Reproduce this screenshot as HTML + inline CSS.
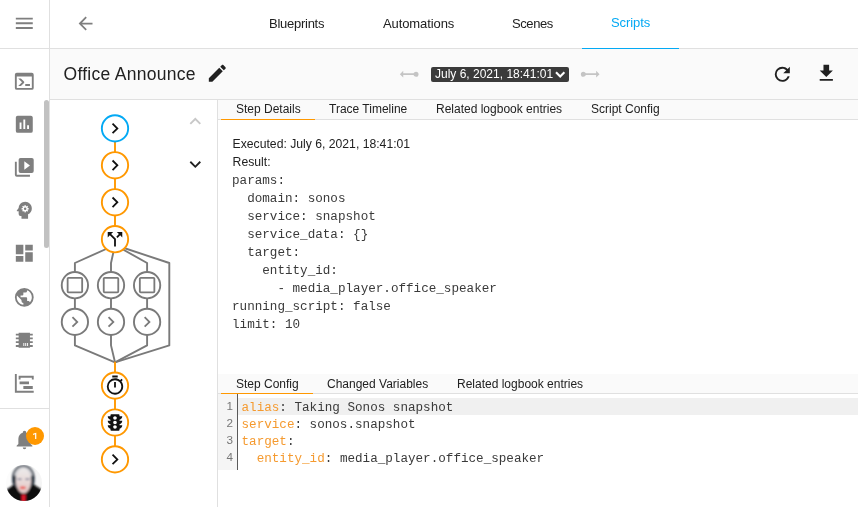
<!DOCTYPE html>
<html>
<head>
<meta charset="utf-8">
<title>Office Announce</title>
<style>
*{box-sizing:border-box;margin:0;padding:0}
html,body{width:858px;height:507px;overflow:hidden;background:#fff;will-change:transform;font-family:"Liberation Sans",sans-serif;color:#212121}
.abs{position:absolute}
svg{display:block;position:absolute;overflow:visible}
/* sidebar */
#sidebar{left:0;top:0;width:50px;height:507px;border-right:1px solid #e0e0e0;background:#fff}
#sidebar .hdr{left:0;top:0;width:49px;height:49px;border-bottom:1px solid #e0e0e0}
#sidebar .div{left:0;top:408px;width:49px;height:1px;background:#e0e0e0}
#sbthumb{left:44px;top:100px;width:5px;height:147.5px;background:#c1c1c1;border-radius:2.5px}
.sico{fill:#757575}
/* top header */
#top{left:50px;top:0;width:808px;height:49px;border-bottom:1px solid #e0e0e0;background:#fff}
.tab{position:absolute;top:0;height:48px;line-height:47px;font-size:13px;color:#212121;white-space:nowrap}
.tab.act{color:#03a9f4}
#tabline{left:582px;top:47.8px;width:97px;height:1.2px;background:#03a9f4}
/* toolbar */
#bar{left:50px;top:49px;width:808px;height:51px;background:#fafafa;border-bottom:1px solid #e0e0e0}
#title{left:63.5px;top:61.5px;font-size:17.5px;letter-spacing:0.28px;line-height:24px;color:#212121;white-space:nowrap}
#sel{left:431px;top:66.5px;width:138px;height:15px;background:#3b3b3b;border-radius:2px;color:#fff;font-size:12px;line-height:15px;padding-left:4px;white-space:nowrap}
/* graph panel */
#graph{left:50px;top:100px;width:168px;height:407px;border-right:1px solid #e0e0e0;background:#fff}
/* info */
.tabs{position:absolute;left:218px;width:640px;height:20px;background:#fafafa;border-bottom:1px solid #e0e0e0}
.t2{position:absolute;top:0;height:19px;line-height:18.7px;font-size:12px;color:#212121;white-space:nowrap}
.tabs.b .t2{top:1px}
.t2line{position:absolute;height:1.4px;background:#ff9800;bottom:-1.2px}
.txt{position:absolute;left:232.6px;font-size:12.2px;line-height:18px;color:#212121;white-space:nowrap}
pre{position:absolute;font-family:"Liberation Mono",monospace;font-size:12.62px;color:#3a3a3a;white-space:pre}
#res{left:232px;top:172.1px;line-height:18px}
#code{left:241.5px;top:399.1px;line-height:17px}
#code b{font-weight:normal;color:#f59a2f}
.ln{position:absolute;left:219px;width:14px;text-align:right;font-size:11.7px;line-height:17px;color:#777;font-family:"Liberation Sans",sans-serif}
#gutter{left:218px;top:394px;width:20px;height:75.5px;border-right:1px solid #5a5a5a;background:#f5f5f5}
#actline{left:238px;top:398px;width:620px;height:17px;background:#f0f0f0}
</style>
</head>
<body>
<!-- SIDEBAR -->
<div id="sidebar" class="abs">
  <div class="hdr abs"></div>
  <div id="sbthumb" class="abs"></div>
  <div class="div abs"></div>
</div>
<!-- SIDEICONS -->
<svg style="left:12.70px;top:11.70px" width="22.6" height="22.6" viewBox="0 0 24 24"><path fill="#7f7f7f" d="M3,6H21V8H3V6M3,11H21V13H3V11M3,16H21V18H3V16Z"/></svg>
<svg style="left:12.80px;top:69.80px" width="22.6" height="22.6" viewBox="0 0 24 24"><path fill="#7f7f7f" d="M20,19V7H4V19H20M20,3A2,2 0 0,1 22,5V19A2,2 0 0,1 20,21H4A2,2 0 0,1 2,19V5C2,3.89 2.9,3 4,3H20M13,17V15H18V17H13M9.58,13L5.57,9H8.4L11.7,12.3C12.09,12.69 12.09,13.33 11.7,13.72L8.42,17H5.59L9.58,13Z"/></svg>
<svg style="left:12.80px;top:112.97px" width="22.6" height="22.6" viewBox="0 0 24 24"><path fill="#7f7f7f" d="M17,17H15V13H17M13,17H11V7H13M9,17H7V10H9M19,3H5C3.89,3 3,3.89 3,5V19A2,2 0 0,0 5,21H19A2,2 0 0,0 21,19V5C21,3.89 20.1,3 19,3Z"/></svg>
<svg style="left:12.80px;top:156.14px" width="22.6" height="22.6" viewBox="0 0 24 24"><path fill="#7f7f7f" d="M4,6H2V20A2,2 0 0,0 4,22H18V20H4V6M20,2H8A2,2 0 0,0 6,4V16A2,2 0 0,0 8,18H20A2,2 0 0,0 22,16V4A2,2 0 0,0 20,2M12,14.5V5.5L18,10L12,14.5Z"/></svg>
<svg style="left:12.80px;top:199.31px" width="22.6" height="22.6" viewBox="0 0 24 24"><path fill="#7f7f7f" d="M13,3C9.23,3 6.19,5.95 6,9.66L4.08,12.19C3.84,12.5 4.08,13 4.5,13H6V16A2,2 0 0,0 8,18H9V21H16V16.31C18.37,15.19 20,12.8 20,10C20,6.14 16.88,3 13,3Z"/><g transform="translate(12.9 10.4) scale(.92)" fill="#fff"><circle r="2.9"/><rect x="-0.85" y="-4.1" width="1.7" height="8.2" transform="rotate(0)"/><rect x="-0.85" y="-4.1" width="1.7" height="8.2" transform="rotate(45)"/><rect x="-0.85" y="-4.1" width="1.7" height="8.2" transform="rotate(90)"/><rect x="-0.85" y="-4.1" width="1.7" height="8.2" transform="rotate(135)"/></g><circle cx="12.9" cy="10.4" r="1.3" fill="#7f7f7f"/></svg>
<svg style="left:12.80px;top:242.48px" width="22.6" height="22.6" viewBox="0 0 24 24"><path fill="#7f7f7f" d="M13,3V9H21V3M13,21H21V11H13M3,21H11V15H3M3,13H11V3H3V13Z"/></svg>
<svg style="left:12.80px;top:285.65px" width="22.6" height="22.6" viewBox="0 0 24 24"><path fill="#7f7f7f" d="M17.9,17.39C17.64,16.59 16.89,16 16,16H15V13A1,1 0 0,0 14,12H8V10H10A1,1 0 0,0 11,9V7H13A2,2 0 0,0 15,5V4.59C17.93,5.77 20,8.64 20,12C20,14.08 19.2,15.97 17.9,17.39M11,19.93C7.05,19.44 4,16.08 4,12C4,11.38 4.08,10.78 4.21,10.21L9,15V16A2,2 0 0,0 11,18M12,2A10,10 0 0,0 2,12A10,10 0 0,0 12,22A10,10 0 0,0 22,12A10,10 0 0,0 12,2Z"/></svg>
<svg style="left:12.80px;top:328.82px" width="22.6" height="22.6" viewBox="0 0 24 24"><path fill="#7f7f7f" d="M6,4H18V5H21V7H18V9H21V11H18V13H21V15H18V17H21V19H18V20H6V19H3V17H6V15H3V13H6V11H3V9H6V7H3V5H6V4M11,15V18H12V15H11M13,15V18H14V15H13M15,15V18H16V15H15Z"/></svg>
<svg style="left:12.80px;top:371.99px" width="22.6" height="22.6" viewBox="0 0 24 24"><path fill="#7f7f7f" d="M2,2H4V20H22V22H2V2M7,10H17V13H7V10M11,15H21V18H11V15M6,4H22V8H20V6H8V8H6V4Z"/></svg>
<svg style="left:13.55px;top:429.06px" width="21" height="21" viewBox="0 0 24 24"><path fill="#7f7f7f" d="M21,19V20H3V19L5,17V11C5,7.9 7.03,5.17 10,4.29C10,4.19 10,4.1 10,4A2,2 0 0,1 12,2A2,2 0 0,1 14,4C14,4.1 14,4.19 14,4.29C16.97,5.17 19,7.9 19,11V17L21,19M14,21A2,2 0 0,1 12,23A2,2 0 0,1 10,21"/></svg>
<div class="abs" style="left:25.9px;top:426.9px;width:18px;height:18px;border-radius:9px;background:#ff9800"><svg style="left:0;top:0" width="18" height="18" viewBox="0 0 18 18"><path fill="#fff" d="M10.3 5.7V11.9H9.1V7.15L7.05 7.9V6.85L10.1 5.7Z"/></svg></div>
<svg style="left:6.1px;top:465px" width="36" height="36" viewBox="0 0 36 36">
<defs><clipPath id="avc"><circle cx="18" cy="18" r="18"/></clipPath><filter id="avb" x="-10%" y="-10%" width="120%" height="120%"><feGaussianBlur stdDeviation="0.85"/></filter>
<linearGradient id="avf" x1="0" y1="0" x2="0" y2="1"><stop offset="0" stop-color="#eceaea"/><stop offset=".45" stop-color="#e9dcdb"/><stop offset="1" stop-color="#e3c3c0"/></linearGradient></defs>
<g clip-path="url(#avc)"><rect width="36" height="36" fill="#fcfcfc"/><rect x="24" width="12" height="36" fill="#f5f5f5"/><g filter="url(#avb)">
<path d="M-2 38V26.5C1 24 6 22 9 17.5L14 25H22L26 17C29 21.5 34 23 38 26V38Z" fill="#0b0b0d"/>
<ellipse cx="17.3" cy="12.3" rx="10.2" ry="11.6" fill="#d6d6da" stroke="#434c56" stroke-width="1.9"/>
<rect x="6.3" y="10.5" width="3.8" height="8.6" rx="1.5" fill="#2c3440"/><rect x="24.7" y="10.5" width="3.8" height="8.6" rx="1.5" fill="#2c3440"/>
<ellipse cx="17.5" cy="15.9" rx="7.5" ry="12.4" fill="url(#avf)"/>
<rect x="11.4" y="13.5" width="4.4" height="1.5" rx=".7" fill="#777a92"/><rect x="19.2" y="13.5" width="4.4" height="1.5" rx=".7" fill="#777a92"/>
<ellipse cx="16.8" cy="22.7" rx="3.1" ry="1.25" fill="#ee4b46"/>
<path d="M15.5 29.6H19.7L19.3 37H16.1Z" fill="#e8172c"/>
</g></g></svg>
<!-- /SIDEICONS -->
<!-- TOP HEADER -->
<div id="top" class="abs"></div>
<div class="tab" style="left:269px;letter-spacing:-0.26px">Blueprints</div>
<div class="tab" style="left:383px;letter-spacing:-0.1px">Automations</div>
<div class="tab" style="left:512px;letter-spacing:-0.42px">Scenes</div>
<div class="tab act" style="left:611px;top:-1px;letter-spacing:-0.07px">Scripts</div>
<div id="tabline" class="abs"></div>
<!-- TOOLBAR -->
<div id="bar" class="abs"></div>
<div id="title" class="abs">Office Announce</div>
<div id="sel" class="abs">July 6, 2021, 18:41:01</div>
<!-- GRAPH -->
<div id="graph" class="abs"></div>
<!-- GSVG -->
<svg style="left:0;top:0" width="218" height="507" viewBox="0 0 218 507"><path d="M115 128V239" stroke="#ff9800" stroke-width="1.9" fill="none"/><path d="M115 245L74.9 263V345.4L115 362.3" stroke="#7a7a7a" stroke-width="1.9" fill="none" stroke-linejoin="round"/><path d="M115 245L111 263V345.4L115 362.3" stroke="#7a7a7a" stroke-width="1.9" fill="none" stroke-linejoin="round"/><path d="M115 245L147.1 263V345.4L115 362.3" stroke="#7a7a7a" stroke-width="1.9" fill="none" stroke-linejoin="round"/><path d="M115 245L169.3 263V345.4L115 362.3" stroke="#7a7a7a" stroke-width="1.9" fill="none" stroke-linejoin="round"/><path d="M115 361.8V459" stroke="#ff9800" stroke-width="1.9" fill="none"/><circle cx="115" cy="128.4" r="13.15" fill="#fff" stroke="#03a9f4" stroke-width="1.9"/><path transform="translate(104.10 117.50) scale(0.9083)" fill="#111" d="M8.59,16.58L13.17,12L8.59,7.41L10,6L16,12L10,18L8.59,16.58Z"/><circle cx="115" cy="165.3" r="13.15" fill="#fff" stroke="#ff9800" stroke-width="1.9"/><path transform="translate(104.10 154.40) scale(0.9083)" fill="#111" d="M8.59,16.58L13.17,12L8.59,7.41L10,6L16,12L10,18L8.59,16.58Z"/><circle cx="115" cy="202.3" r="13.15" fill="#fff" stroke="#ff9800" stroke-width="1.9"/><path transform="translate(104.10 191.40) scale(0.9083)" fill="#111" d="M8.59,16.58L13.17,12L8.59,7.41L10,6L16,12L10,18L8.59,16.58Z"/><circle cx="115" cy="239.2" r="13.15" fill="#fff" stroke="#ff9800" stroke-width="1.9"/><path transform="translate(104.10 228.30) scale(0.9083)" fill="#111" d="M14,4L16.29,6.29L13.41,9.17L14.83,10.59L17.71,7.71L20,10V4M10,4H4V10L6.29,7.71L11,12.41V20H13V11.59L7.71,6.29"/><circle cx="74.9" cy="285.2" r="13.15" fill="#fff" stroke="#7a7a7a" stroke-width="1.9"/><path transform="translate(64.00 274.30) scale(0.9083)" fill="#7a7a7a" d="M19,3H5C3.89,3 3,3.89 3,5V19A2,2 0 0,0 5,21H19A2,2 0 0,0 21,19V5C21,3.89 20.1,3 19,3M19,5V19H5V5H19Z"/><circle cx="74.9" cy="321.9" r="13.15" fill="#fff" stroke="#7a7a7a" stroke-width="1.9"/><path transform="translate(64.00 311.00) scale(0.9083)" fill="#7a7a7a" d="M8.59,16.58L13.17,12L8.59,7.41L10,6L16,12L10,18L8.59,16.58Z"/><circle cx="111" cy="285.2" r="13.15" fill="#fff" stroke="#7a7a7a" stroke-width="1.9"/><path transform="translate(100.10 274.30) scale(0.9083)" fill="#7a7a7a" d="M19,3H5C3.89,3 3,3.89 3,5V19A2,2 0 0,0 5,21H19A2,2 0 0,0 21,19V5C21,3.89 20.1,3 19,3M19,5V19H5V5H19Z"/><circle cx="111" cy="321.9" r="13.15" fill="#fff" stroke="#7a7a7a" stroke-width="1.9"/><path transform="translate(100.10 311.00) scale(0.9083)" fill="#7a7a7a" d="M8.59,16.58L13.17,12L8.59,7.41L10,6L16,12L10,18L8.59,16.58Z"/><circle cx="147.1" cy="285.2" r="13.15" fill="#fff" stroke="#7a7a7a" stroke-width="1.9"/><path transform="translate(136.20 274.30) scale(0.9083)" fill="#7a7a7a" d="M19,3H5C3.89,3 3,3.89 3,5V19A2,2 0 0,0 5,21H19A2,2 0 0,0 21,19V5C21,3.89 20.1,3 19,3M19,5V19H5V5H19Z"/><circle cx="147.1" cy="321.9" r="13.15" fill="#fff" stroke="#7a7a7a" stroke-width="1.9"/><path transform="translate(136.20 311.00) scale(0.9083)" fill="#7a7a7a" d="M8.59,16.58L13.17,12L8.59,7.41L10,6L16,12L10,18L8.59,16.58Z"/><circle cx="115" cy="385.6" r="13.15" fill="#fff" stroke="#ff9800" stroke-width="1.9"/><path transform="translate(104.10 374.70) scale(0.9083)" fill="#111" d="M12,20A7,7 0 0,1 5,13A7,7 0 0,1 12,6A7,7 0 0,1 19,13A7,7 0 0,1 12,20M19.03,7.39L20.45,5.97C20,5.46 19.55,5 19.04,4.56L17.62,6C16.07,4.74 14.12,4 12,4A9,9 0 0,0 3,13A9,9 0 0,0 12,22C17,22 21,17.97 21,13C21,10.88 20.26,8.93 19.03,7.39M11,14H13V8H11M15,1H9V3H15V1Z"/><circle cx="115" cy="422.5" r="13.15" fill="#fff" stroke="#ff9800" stroke-width="1.9"/><path transform="translate(104.10 411.60) scale(0.9083)" fill="#111" d="M12,9A2,2 0 0,1 10,7C10,5.89 10.9,5 12,5C13.11,5 14,5.89 14,7A2,2 0 0,1 12,9M12,14A2,2 0 0,1 10,12C10,10.89 10.9,10 12,10C13.11,10 14,10.89 14,12A2,2 0 0,1 12,14M12,19A2,2 0 0,1 10,17C10,15.89 10.9,15 12,15C13.11,15 14,15.89 14,17A2,2 0 0,1 12,19M20,10H17V8.86C18.72,8.41 20,6.86 20,5H17V4A1,1 0 0,0 16,3H8A1,1 0 0,0 7,4V5H4C4,6.86 5.28,8.41 7,8.86V10H4C4,11.86 5.28,13.41 7,13.86V15H4C4,16.86 5.28,18.41 7,18.86V20A1,1 0 0,0 8,21H16A1,1 0 0,0 17,20V18.86C18.72,18.41 20,16.86 20,15H17V13.86C18.72,13.41 20,11.86 20,10Z"/><circle cx="115" cy="459.4" r="13.15" fill="#fff" stroke="#ff9800" stroke-width="1.9"/><path transform="translate(104.10 448.50) scale(0.9083)" fill="#111" d="M8.59,16.58L13.17,12L8.59,7.41L10,6L16,12L10,18L8.59,16.58Z"/></svg><svg style="left:183.50px;top:109.60px" width="22.6" height="22.6" viewBox="0 0 24 24"><path fill="#c8c8c8" d="M7.41,15.41L12,10.83L16.59,15.41L18,14L12,8L6,14L7.41,15.41Z"/></svg><svg style="left:183.50px;top:153.10px" width="22.6" height="22.6" viewBox="0 0 24 24"><path fill="#212121" d="M7.41,8.58L12,13.17L16.59,8.58L18,10L12,16L6,10L7.41,8.58Z"/></svg>
<!-- /GSVG -->
<!-- TICONS -->
<svg style="left:75.10px;top:12.90px" width="21" height="21" viewBox="0 0 24 24"><path fill="#7f7f7f" d="M20,11V13H8L13.5,18.5L12.08,19.92L4.16,12L12.08,4.08L13.5,5.5L8,11H20Z"/></svg>
<svg style="left:205.70px;top:62.40px" width="22.6" height="22.6" viewBox="0 0 24 24"><path fill="#212121" d="M20.71,7.04C21.1,6.65 21.1,6 20.71,5.63L18.37,3.29C18,2.9 17.35,2.9 16.96,3.29L15.12,5.12L18.87,8.87M3,17.25V21H6.75L17.81,9.93L14.06,6.18L3,17.25Z"/></svg>
<svg style="left:771.40px;top:63.00px" width="22.6" height="22.6" viewBox="0 0 24 24"><path fill="#212121" d="M17.65,6.35C16.2,4.9 14.21,4 12,4A8,8 0 0,0 4,12A8,8 0 0,0 12,20C15.73,20 18.84,17.45 19.73,14H17.65C16.83,16.33 14.61,18 12,18A6,6 0 0,1 6,12A6,6 0 0,1 12,6C13.66,6 15.14,6.69 16.22,7.78L13,11H20V4L17.65,6.35Z"/></svg>
<svg style="left:814.60px;top:62.30px" width="22.6" height="22.6" viewBox="0 0 24 24"><path fill="#212121" d="M5,20H19V18H5M19,9H15V3H9V9H5L12,16L19,9Z"/></svg>
<svg style="left:399.10px;top:64.00px" width="20.4" height="20.4" viewBox="0 0 24 24"><path fill="#c4c4c4" d="M1,12L5,16V13H17.17C17.58,14.17 18.69,15 20,15A3,3 0 0,0 23,12A3,3 0 0,0 20,9C18.69,9 17.58,9.83 17.17,11H5V8L1,12Z"/></svg>
<svg style="left:580.10px;top:64.00px" width="20.4" height="20.4" viewBox="0 0 24 24"><path fill="#c4c4c4" d="M23,12L19,16V13H6.83C6.42,14.17 5.31,15 4,15A3,3 0 0,1 1,12A3,3 0 0,1 4,9C5.31,9 6.42,9.83 6.83,11H19V8L23,12Z"/></svg>
<svg style="left:555px;top:70.6px" width="10.4" height="7" viewBox="0 0 10.4 7"><path d="M1 1.2L5.2 5.4L9.4 1.2" fill="none" stroke="#fff" stroke-width="2.1"/></svg>
<!-- /TICONS -->
<!-- INFO TABS -->
<div class="tabs" style="top:100px">
  <div class="t2" style="left:18px">Step Details</div>
  <div class="t2" style="left:111px">Trace Timeline</div>
  <div class="t2" style="left:218px">Related logbook entries</div>
  <div class="t2" style="left:373px">Script Config</div>
  <div class="t2line" style="left:3px;width:93.8px"></div>
</div>
<div class="txt" style="top:135px">Executed: July 6, 2021, 18:41:01</div>
<div class="txt" style="top:153px">Result:</div>
<pre id="res">params:
  domain: sonos
  service: snapshot
  service_data: {}
  target:
    entity_id:
      - media_player.office_speaker
running_script: false
limit: 10</pre>
<div class="tabs b" style="top:374px">
  <div class="t2" style="left:18px">Step Config</div>
  <div class="t2" style="left:109px">Changed Variables</div>
  <div class="t2" style="left:239px">Related logbook entries</div>
  <div class="t2line" style="left:3px;width:92px"></div>
</div>
<div id="actline" class="abs"></div>
<div id="gutter" class="abs"></div>
<div class="ln" style="top:397.2px">1</div>
<div class="ln" style="top:414.2px">2</div>
<div class="ln" style="top:431.2px">3</div>
<div class="ln" style="top:448.2px">4</div>
<pre id="code"><b>alias</b>: Taking Sonos snapshot
<b>service</b>: sonos.snapshot
<b>target</b>:
  <b>entity_id</b>: media_player.office_speaker</pre>
</body>
</html>
